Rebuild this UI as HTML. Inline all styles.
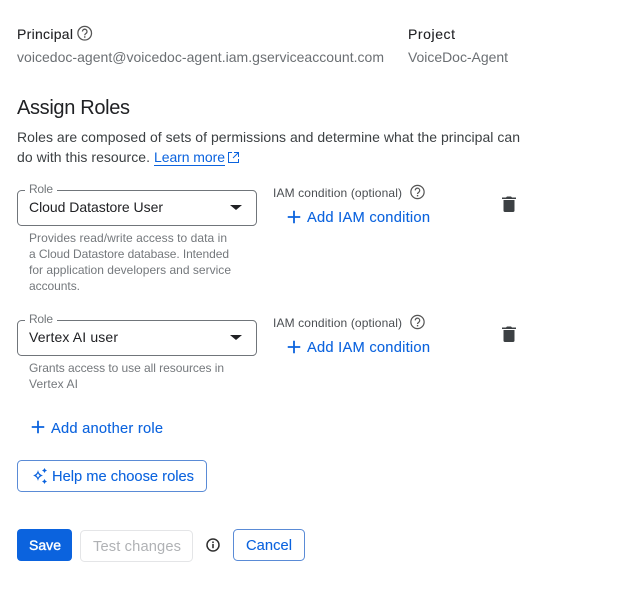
<!DOCTYPE html>
<html><head><meta charset="utf-8"><style>
html,body{margin:0;padding:0;background:#fff;width:642px;height:600px;overflow:hidden}
svg{display:block}
text{font-family:"Liberation Sans",sans-serif;font-size:14px;fill:#3c4043}
.g{fill:#6b6f73}
.b{font-size:14.700px;fill:#0b63de;stroke:#0b63de;stroke-width:.1}
.m{stroke:#202124;stroke-width:.1;fill:#202124}
.s{font-size:12px;fill:#74787c}
.l{font-size:12px;fill:#4a4e52}
</style></head><body>
<svg width="642" height="600" viewBox="0 0 642 600" xmlns="http://www.w3.org/2000/svg">
<defs>
<g id="help"><circle cx="7" cy="7" r="6.200" fill="none" stroke="#555" stroke-width="1.150"/><path d="M4.900 5.500a2.100 2.100 0 1 1 3.300 1.700c-.8.600-1.200 1-1.200 1.700" fill="none" stroke="#555" stroke-width="1.150"/><rect x="6.400" y="9.800" width="1.300" height="1.300" fill="#555"/></g>
<path id="plus" d="M6.250 0v12.500M0 6.250h12.500" stroke="#0b63de" stroke-width="1.800" fill="none"/>
<path id="trash" d="M1.500 4h11v10.500a1.500 1.500 0 0 1-1.500 1.500H3a1.500 1.500 0 0 1-1.500-1.500zM0 1.500h4L5 .5h4l1 1h4V3H0z" fill="#3c4043"/>
<path id="arrow" d="M0 0h12L6 5z" fill="#202124"/>
</defs>

<text x="17" y="39" textLength="56" class="m">Principal</text>
<use href="#help" transform="translate(77 25.500) scale(1.100)"/>
<text x="17" y="62" textLength="367" class="g">voicedoc-agent@voicedoc-agent.iam.gserviceaccount.com</text>
<text x="408" y="39" textLength="47" class="m">Project</text>
<text x="408" y="62" textLength="100" class="g">VoiceDoc-Agent</text>

<text x="17" y="114" textLength="113" style="font-size:20px;fill:#202124">Assign Roles</text>
<text x="17" y="142" textLength="503">Roles are composed of sets of permissions and determine what the principal can</text>
<text x="17" y="162" textLength="133">do with this resource.</text>
<text x="154" y="162" textLength="71" style="fill:#0b63de">Learn more</text>
<rect x="154" y="165" width="71" height="1" fill="#0b63de"/>
<g fill="none" stroke="#0b63de" stroke-width="1"><path d="M232 152.500H228.500V162.500H238.500V159"/><path d="M234 152.500h4.500V157M238.500 152.500l-5.500 5.500"/></g>

<!-- row 1 -->
<rect x="17.500" y="190.500" width="239" height="35" rx="4" fill="#fff" stroke="#70757a"/>
<rect x="25" y="186" width="32" height="8" fill="#fff"/>
<text x="29" y="193" textLength="24" class="s">Role</text>
<text x="29" y="212" textLength="134" style="fill:#202124">Cloud Datastore User</text>
<use href="#arrow" x="230" y="205"/>
<text x="29" y="242" textLength="198" class="s">Provides read/write access to data in</text>
<text x="29" y="258" textLength="200" class="s">a Cloud Datastore database. Intended</text>
<text x="29" y="274" textLength="202" class="s">for application developers and service</text>
<text x="29" y="290" textLength="51" class="s">accounts.</text>
<text x="273" y="197" textLength="129" class="l">IAM condition (optional)</text>
<use href="#help" transform="translate(410 184.500) scale(1.070)"/>
<use href="#plus" x="287.750" y="210.750"/>
<text x="307" y="222" textLength="123" class="b">Add IAM condition</text>
<use href="#trash" x="502" y="196"/>

<!-- row 2 -->
<rect x="17.500" y="320.500" width="239" height="35" rx="4" fill="#fff" stroke="#70757a"/>
<rect x="25" y="316" width="32" height="8" fill="#fff"/>
<text x="29" y="323" textLength="24" class="s">Role</text>
<text x="29" y="342" textLength="89" style="fill:#202124">Vertex AI user</text>
<use href="#arrow" x="230" y="335"/>
<text x="29" y="372" textLength="195" class="s">Grants access to use all resources in</text>
<text x="29" y="388" textLength="49" class="s">Vertex AI</text>
<text x="273" y="327" textLength="129" class="l">IAM condition (optional)</text>
<use href="#help" transform="translate(410 314.500) scale(1.070)"/>
<use href="#plus" x="287.750" y="340.750"/>
<text x="307" y="352" textLength="123" class="b">Add IAM condition</text>
<use href="#trash" x="502" y="326"/>

<use href="#plus" x="31.750" y="420.750"/>
<text x="51" y="433" textLength="112" class="b">Add another role</text>

<!-- help -->
<rect x="17.500" y="460.500" width="189" height="31" rx="4" fill="#fff" stroke="#5a8bd6"/>
<g fill="#0b63de">
<path d="M38 470c.6 3 1.900 4.400 5 5.500-3.100 1.100-4.400 2.500-5 5.500-.6-3-1.900-4.400-5-5.500 3.100-1.100 4.400-2.500 5-5.500zm0 3.200c-.4.900-.9 1.400-1.800 2.300.9.900 1.400 1.400 1.800 2.300.4-.9.900-1.400 1.800-2.300-.9-.9-1.400-1.400-1.800-2.300z" fill-rule="evenodd"/>
<path d="M44.500 468l.9 1.600 1.600.9-1.600.9-.9 1.600-.9-1.600-1.600-.9 1.600-.9zM44.500 479l.9 1.600 1.600.9-1.600.9-.9 1.600-.9-1.600-1.600-.9 1.600-.9z"/>
</g>
<text x="52" y="481" textLength="142" class="b">Help me choose roles</text>

<!-- actions -->
<rect x="17" y="529" width="55" height="32" rx="4" fill="#0b63de"/>
<text x="29" y="550" textLength="32" style="fill:#fff;stroke:#fff;stroke-width:.4">Save</text>
<rect x="80.500" y="530.500" width="112" height="31" rx="4" fill="#fff" stroke="#e4e5e7"/>
<text x="93" y="551" textLength="88" style="font-size:14.700px;fill:#b0b2b5">Test changes</text>
<circle cx="213" cy="545" r="6" fill="none" stroke="#303030" stroke-width="1.500"/>
<rect x="212.200" y="544" width="1.600" height="4.200" fill="#303030"/><rect x="212.200" y="541.500" width="1.600" height="1.600" fill="#303030"/>
<rect x="233.500" y="529.500" width="71" height="31" rx="4" fill="#fff" stroke="#5a8bd6"/>
<text x="246" y="550" textLength="46" class="b">Cancel</text>
</svg>
</body></html>
